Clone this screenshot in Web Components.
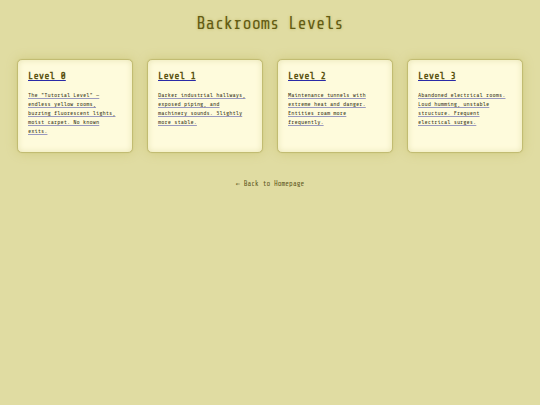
<!DOCTYPE html>
<html lang="en">
<head>
<meta charset="utf-8">
<meta name="viewport" content="width=device-width, initial-scale=1">
<title>Backrooms Levels</title>
<style>
  html { background: #e0dca2; }
  body { margin: 0; font-family: "Share Tech Mono", "DejaVu Sans Mono", "Liberation Mono", monospace; color: #4b4820; }
</style>
</head>
<body>
<levels-page>
  <level-card href="#level-0" name="Level 0">The "Tutorial Level" — endless yellow rooms, buzzing fluorescent lights, moist carpet. No known exits.</level-card>
  <level-card href="#level-1" name="Level 1">Darker industrial hallways, exposed piping, and machinery sounds. Slightly more stable.</level-card>
  <level-card href="#level-2" name="Level 2">Maintenance tunnels with extreme heat and danger. Entities roam more frequently.</level-card>
  <level-card href="#level-3" name="Level 3">Abandoned electrical rooms. Loud humming, unstable structure. Frequent electrical surges.</level-card>
  <back-link slot="footer" href="#home">← Back to Homepage</back-link>
</levels-page>
<script>
class LevelsPage extends HTMLElement {
  constructor() {
    super();
    this.attachShadow({ mode: "open" }).innerHTML = `
      <style>
        :host { display: block; padding: 14px 17px; }
        h1 { margin: 0; font-size: 17px; line-height: 20px; font-weight: 400; text-align: center; color: #625b12; text-shadow: 0 0 3px #bdb566; }
        main { display: grid; grid-template-columns: repeat(auto-fit, minmax(110px, 1fr)); gap: 14px; margin-top: 25px; }
        footer { margin-top: 27px; text-align: center; }
      </style>
      <h1>Backrooms Levels</h1>
      <main><slot></slot></main>
      <footer><slot name="footer"></slot></footer>`;
  }
}
class LevelCard extends HTMLElement {
  connectedCallback() {
    if (this.shadowRoot) return;
    this.attachShadow({ mode: "open" }).innerHTML = `
      <style>
        :host { display: grid; }
        a {
          display: block; padding: 10px 12px 16px 10px;
          background: #fefbdc; border: 1px solid #c2bc72; border-radius: 5px;
          box-shadow: 0 0 1px #c2bc72, 0 0 12px #d0ca82, inset 0 0 6px #e9e4b4;
          text-decoration: none;
        }
        h2 { margin: 0; font-size: 10px; line-height: 12px; font-weight: 700; color: #5a5412; text-decoration: underline 1px #2a2aa8; text-underline-offset: 1px; }
        p { margin: 9px 0 0; font-size: 6px; line-height: 9px; color: #3c3a24; text-decoration: underline 1px #9a9abf; text-decoration-skip-ink: none; text-underline-offset: 1px; }
      </style>
      <a><h2></h2><p><slot></slot></p></a>`;
    this.shadowRoot.querySelector("a").href = this.getAttribute("href");
    this.shadowRoot.querySelector("h2").textContent = this.getAttribute("name");
  }
}
class BackLink extends HTMLElement {
  connectedCallback() {
    if (this.shadowRoot) return;
    this.attachShadow({ mode: "open" }).innerHTML = `
      <style>
        :host { display: block; font-size: 7px; line-height: 9px; }
        a { color: #5c561c; text-decoration: none; }
      </style>
      <a><slot></slot></a>`;
    this.shadowRoot.querySelector("a").href = this.getAttribute("href");
  }
}
customElements.define("levels-page", LevelsPage);
customElements.define("level-card", LevelCard);
customElements.define("back-link", BackLink);
</script>
</body>
</html>
